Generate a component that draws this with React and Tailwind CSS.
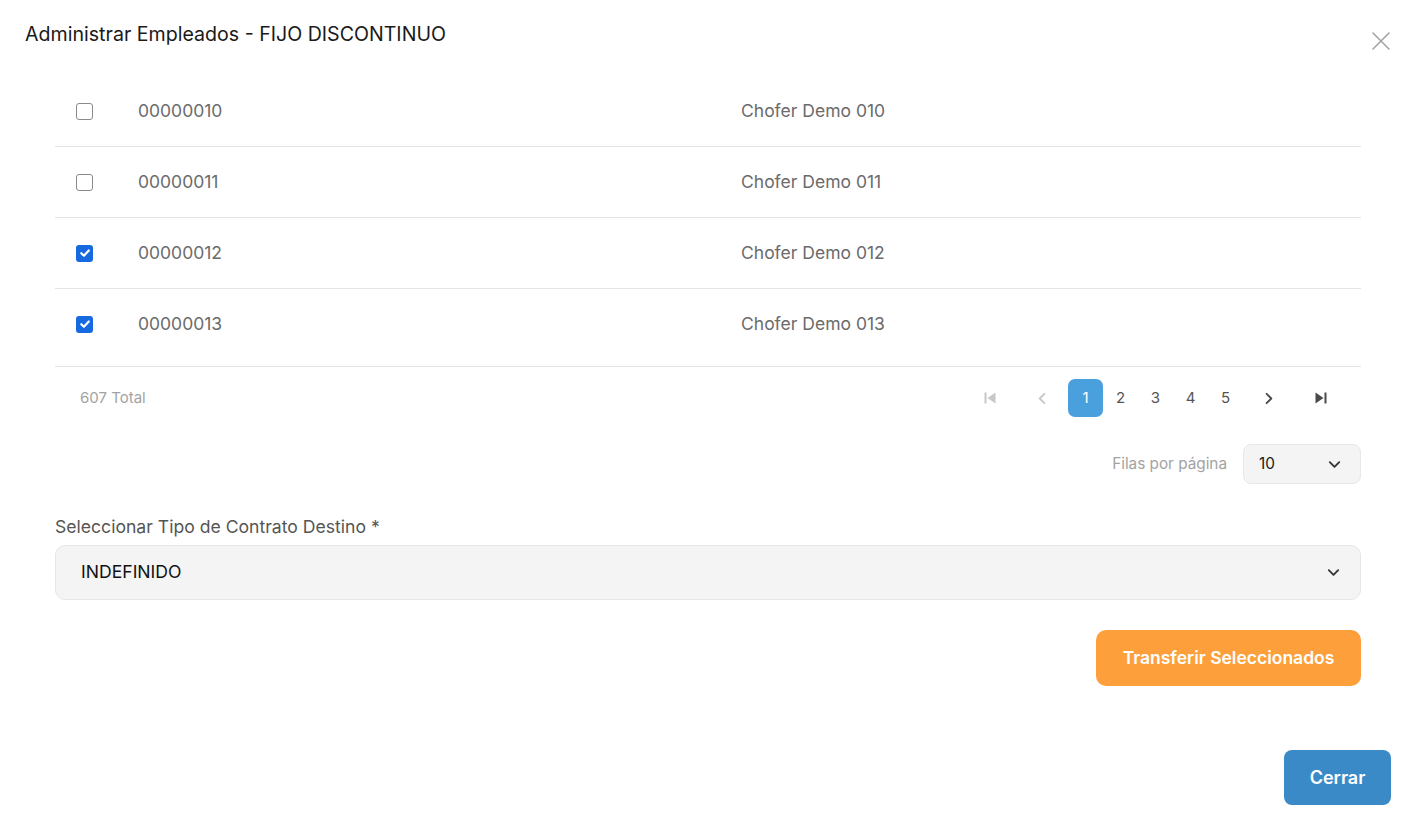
import React from "react";

const rows = [
  { code: "00000010", name: "Chofer Demo 010", checked: false },
  { code: "00000011", name: "Chofer Demo 011", checked: false },
  { code: "00000012", name: "Chofer Demo 012", checked: true },
  { code: "00000013", name: "Chofer Demo 013", checked: true },
];

function Checkbox({ checked }) {
  if (checked) {
    return (
      <div className="w-[17px] h-[17px] rounded-[3px] bg-[#1769e0] flex items-center justify-center">
        <svg width="12" height="12" viewBox="0 0 12 12" fill="none">
          <path d="M2.3 6.2 L4.9 8.7 L9.8 3.5" stroke="white" strokeWidth="2.2" strokeLinecap="round" strokeLinejoin="round" />
        </svg>
      </div>
    );
  }
  return <div className="w-[17px] h-[17px] rounded-[3px] border border-[#8a8a8a] bg-white" />;
}

function Chevron({ dir = "down", color = "#333", size = 14 }) {
  const d = {
    down: "M3 5.5 L8 10.5 L13 5.5",
    left: "M10 3 L5 8 L10 13",
    right: "M6 3 L11 8 L6 13",
  }[dir];
  return (
    <svg width={size} height={size} viewBox="0 0 16 16" fill="none">
      <path d={d} stroke={color} strokeWidth="2" strokeLinecap="round" strokeLinejoin="round" />
    </svg>
  );
}

export default function App() {
  return (
    <div className="w-[1416px] h-[823px] bg-white relative" style={{ fontFamily: "Inter, 'Noto Sans', sans-serif" }}>
      <div className="absolute left-[1371px] top-[31px]">
        <svg width="20" height="20" viewBox="0 0 20 20" fill="none">
          <path d="M2 2 L18 18 M18 2 L2 18" stroke="#a3a3a3" strokeWidth="1.6" strokeLinecap="round" />
        </svg>
      </div>
      <div className="pt-[20px] px-[25px]">
        <h1 className="text-[19.6px] leading-[28px] text-[#1a1a1a] font-normal">Administrar Empleados - FIJO DISCONTINUO</h1>
      </div>

      <div className="px-[55px] pt-[28px]">
        {/* table */}
        <div>
          {rows.map((r, i) => (
            <div
              key={r.code}
              className={
                "flex items-center border-b border-[#e4e4e7] " +
                (i === 3 ? "h-[78px] pb-[7px]" : "h-[71px]")
              }
            >
              <div className="w-[83px] pl-[21px] flex items-center">
                <Checkbox checked={r.checked} />
              </div>
              <div className="w-[603px] text-[17.5px] text-[#6b6b6b]">{r.code}</div>
              <div className="flex-1 text-[17.5px] text-[#6b6b6b]">{r.name}</div>
            </div>
          ))}
        </div>

        {/* pagination */}
        <div className="flex items-center justify-between pt-[12px] pl-[25px] pr-[23px]">
          <span className="text-[15px] text-[#a3a3a3]">607 Total</span>
          <div className="flex items-center">
            <div className="w-[35px] h-[38px] flex items-center justify-center">
              <svg width="16" height="16" viewBox="0 0 16 16">
                <rect x="2.5" y="2.5" width="2" height="11" fill="#c8c8c8" />
                <path d="M13.5 2.5 L5.5 8 L13.5 13.5 Z" fill="#c8c8c8" />
              </svg>
            </div>
            <div className="w-[35px] h-[38px] ml-[18px] flex items-center justify-center">
              <Chevron dir="left" color="#c8c8c8" size={15} />
            </div>
            <div className="ml-[8px] w-[35px] h-[38px] rounded-[7px] bg-[#4a9fdd] text-white text-[15px] flex items-center justify-center">1</div>
            {["2", "3", "4", "5"].map((p) => (
              <div key={p} className="w-[35px] h-[38px] text-[15px] text-[#555] flex items-center justify-center">{p}</div>
            ))}
            <div className="w-[35px] h-[38px] ml-[8px] flex items-center justify-center">
              <Chevron dir="right" color="#4a4a4a" size={15} />
            </div>
            <div className="w-[35px] h-[38px] ml-[17px] flex items-center justify-center">
              <svg width="16" height="16" viewBox="0 0 16 16">
                <path d="M2.5 2.5 L10.5 8 L2.5 13.5 Z" fill="#4a4a4a" />
                <rect x="11.5" y="2.5" width="2" height="11" fill="#4a4a4a" />
              </svg>
            </div>
          </div>
        </div>

        {/* rows per page */}
        <div className="flex items-center justify-end mt-[27px] gap-[16px]">
          <span className="text-[15.3px] text-[#a3a3a3]">Filas por página</span>
          <div className="w-[118px] h-[40px] rounded-[8px] border border-[#e8e8ea] bg-[#f4f4f5] flex items-center justify-between pl-[15px] pr-[18px]">
            <span className="text-[15.3px] text-[#1a1a1a]">10</span>
            <Chevron dir="down" color="#333" size={15} />
          </div>
        </div>

        {/* contract type */}
        <div className="mt-[31px]">
          <label className="block text-[17.6px] leading-[24px] text-[#555]">Seleccionar Tipo de Contrato Destino *</label>
          <div className="mt-[6px] h-[55px] rounded-[10px] border border-[#e6e6e8] bg-[#f4f4f5] flex items-center justify-between pl-[25px] pr-[19px]">
            <span className="text-[17.6px] text-[#111]">INDEFINIDO</span>
            <Chevron dir="down" color="#333" size={15} />
          </div>
        </div>

        <div className="flex justify-end mt-[30px]">
          <button className="w-[265px] h-[56px] rounded-[10px] bg-[#fd9f3a] text-white text-[17.5px] font-semibold">Transferir Seleccionados</button>
        </div>
      </div>

      <div className="flex justify-end pr-[25px] mt-[64px]">
        <button className="w-[107px] h-[55px] rounded-[8px] bg-[#3a8ac8] text-white text-[18px] font-semibold">Cerrar</button>
      </div>
    </div>
  );
}
